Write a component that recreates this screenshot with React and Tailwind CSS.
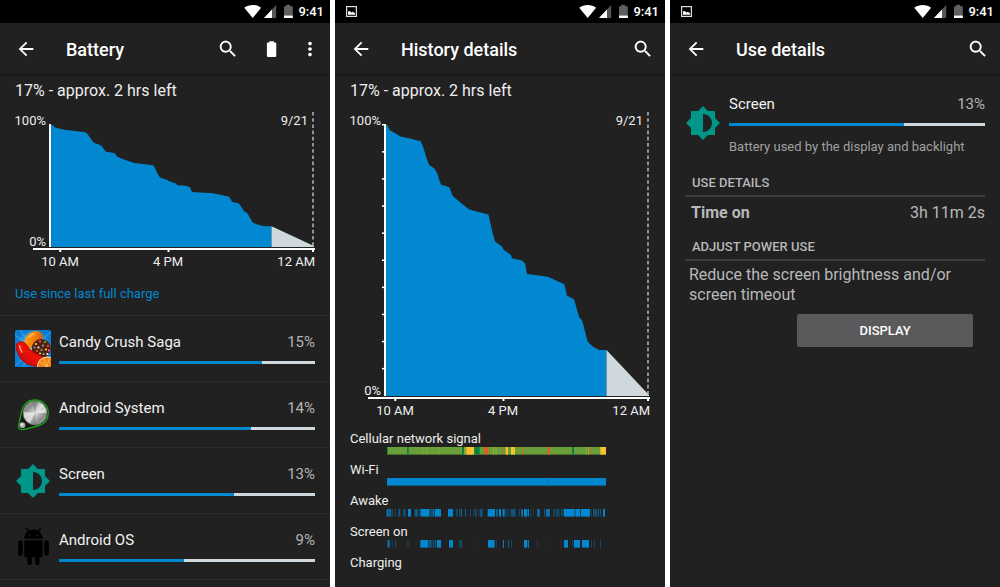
import React from "react";

/* Battery level over time: [x position, charge in percent] */
const LEVELS = [
  [51, 100], [52.3, 100], [55, 98], [58, 97.4], [65.7, 95.8], [75, 95], [85.7, 94], [88, 92],
  [92.3, 87], [94.3, 85.2], [99, 84], [102, 82.5], [104, 80], [106, 78], [114.3, 77], [117.7, 73.8],
  [126, 71.2], [134.3, 68.8], [153.3, 67], [154.5, 65.5], [157, 61], [160, 57], [167, 55.2],
  [168.7, 54], [176, 52], [177, 50.8], [187, 50], [190, 49], [192, 45], [213, 44], [229.3, 41.2],
  [232, 37], [239, 35.7], [244.3, 29], [247, 28], [252.7, 20], [258, 18.2], [264.3, 17], [271.5, 17],
];

function LevelChart({ height, ticks }) {
  const top = 21;
  const bottom = height - 27;
  const y = (level) => bottom - ((bottom - top) * level) / 100;
  const line = LEVELS.map(([x, level]) => `${x},${y(level)}`).join(" ");
  return (
    <svg
      viewBox={`0 0 330 ${height}`}
      className="block h-auto w-full fill-[#eeeeee] text-[13px]"
      role="img"
      aria-label="Battery level history"
    >
      <polygon points={`${line} 271.5,${bottom} 51,${bottom}`} fill="#0288d1" />
      <polygon points={`271.5,${y(17)} 314,${bottom - 1} 314,${bottom} 271.5,${bottom}`} fill="#cfd8dc" />
      <line x1="313" x2="313" y1="8" y2={bottom - 1} stroke="#c4c4c4" strokeWidth="1.4" strokeDasharray="3.6 2.6" />
      <rect x="49" y="20" width="2" height={bottom - 20} fill="#ffffff" />
      <rect x="33" y={bottom + 1} width="282" height="2" fill="#ffffff" />
      {[60.3, 168.5, 313].map((x) => (
        <rect key={x} x={x - 1} y={bottom + 2} width="2" height="3" fill="#ffffff" />
      ))}
      {ticks &&
        [100, 90, 80, 70, 60, 50, 40, 30, 20, 10].map((level) => (
          <rect key={level} x="47" y={y(level) - 1} width="3" height="1.5" fill="#ffffff" />
        ))}
      <text x="46" y="21" textAnchor="end">100%</text>
      <text x="46" y={bottom - 1} textAnchor="end">0%</text>
      <text x="308" y="21" textAnchor="end">9/21</text>
      <text x="60" y={bottom + 19} textAnchor="middle">10 AM</text>
      <text x="168" y={bottom + 19} textAnchor="middle">4 PM</text>
      <text x="315" y={bottom + 19} textAnchor="end">12 AM</text>
    </svg>
  );
}

function StatusBar({ picture }) {
  return (
    <div className="flex h-[23px] items-center bg-black pr-[6px] pl-[11px] text-white">
      {picture && (
        <svg width="11" height="11" viewBox="0 0 11 11" aria-hidden="true">
          <rect x=".6" y=".6" width="9.8" height="9.8" fill="none" stroke="#e0e0e0" strokeWidth="1.2" />
          <path d="M2 8.8V5.6l1.8-.6 1.6 1.6 1.5-.9 2.1 1.6v1.5z" fill="#fff" />
        </svg>
      )}
      <div className="ml-auto flex items-center">
        <svg width="50" height="15" viewBox="0 0 50 15" aria-hidden="true">
          <path d="M.3 3.7C2.6 2 5.5 1 8.7 1s6.100 1 8.400 2.700L8.700 14z" fill="#fff" />
          <path d="M32.200 1v13H20z" fill="#555" />
          <path d="M28 5.500V14h-8z" fill="#fff" />
          <path d="M40 2.200h2.200V.7h4v1.500h2.600V14H40z" fill="#5f5f5f" />
          <path d="M40 11.600h8.800V14H40z" fill="#fff" />
        </svg>
        <span className="ml-1 text-[13px] leading-4 font-medium">9:41</span>
      </div>
    </div>
  );
}

function IconButton({ label, children }) {
  return (
    <button type="button" aria-label={label} className="shrink-0">
      <svg width="22" height="22" viewBox="0 0 24 24" fill="#fff" aria-hidden="true">
        {children}
      </svg>
    </button>
  );
}

function Toolbar({ title, extra }) {
  return (
    <header className="flex h-[53px] items-center border-b-2 border-[#191919] px-[15px]">
      <IconButton label="Back">
        <path d="M20 11H7.830l5.590-5.590L12 4l-8 8 8 8 1.410-1.410L7.830 13H20v-2z" />
      </IconButton>
      <h1 className="ml-[29px] pt-[2px] text-[18px] leading-6 font-medium text-white">{title}</h1>
      <div className={extra ? "-mr-[6px] ml-auto flex items-center gap-[19px]" : "-mr-[4px] ml-auto flex items-center"}>
        <IconButton label="Search">
          <path d="M15.500 14h-.790l-.280-.270C15.410 12.590 16 11.110 16 9.500 16 5.910 13.090 3 9.500 3S3 5.910 3 9.500 5.910 16 9.500 16c1.610 0 3.090-.590 4.230-1.570l.270.280v.790l5 4.990L20.490 19l-4.990-5zm-6 0C7.010 14 5 11.990 5 9.500S7.010 5 9.500 5 14 7.010 14 9.500 11.990 14 9.500 14z" />
        </IconButton>
        {extra && (
          <>
            <IconButton label="Battery saver">
              <path d="M9.700 5.900c0-.5.400-.9.900-.9h1.700V3.600h5V5h1.700c.5 0 .9.400.9.900v13.800c0 .5-.4.900-.9.900h-8.400c-.5 0-.9-.4-.9-.9z" />
            </IconButton>
            <IconButton label="More options">
              <path d="M12 8c1.100 0 2-.9 2-2s-.9-2-2-2-2 .9-2 2 .9 2 2 2zm0 2c-1.100 0-2 .9-2 2s.9 2 2 2 2-.9 2-2-.9-2-2-2zm0 6c-1.100 0-2 .9-2 2s.9 2 2 2 2-.9 2-2-.9-2-2-2z" />
            </IconButton>
          </>
        )}
      </div>
    </header>
  );
}

function Panel({ title, picture, extra, children }) {
  return (
    <section className="flex min-w-0 flex-col bg-[#212121]" aria-label={title}>
      <StatusBar picture={picture} />
      <Toolbar title={title} extra={extra} />
      {children}
    </section>
  );
}

function Summary() {
  return (
    <p className="px-[15px] pt-[2px] text-[16px] leading-[26px] text-[#eeeeee]">17% - approx. 2 hrs left</p>
  );
}

function CandyIcon() {
  return (
    <svg width="36" height="37" viewBox="0 0 36 37" aria-hidden="true">
      <defs>
        <radialGradient id="sky">
          <stop offset="0" stopColor="#b4e6fc" />
          <stop offset=".55" stopColor="#49aee8" />
          <stop offset="1" stopColor="#0b7ed2" />
        </radialGradient>
        <linearGradient id="orange" x1="0" y1="0" x2="1" y2="1">
          <stop offset="0" stopColor="#ffab25" />
          <stop offset=".5" stopColor="#f58207" />
          <stop offset="1" stopColor="#c94d00" />
        </linearGradient>
        <linearGradient id="red" x1="0" y1="1" x2="1" y2="0">
          <stop offset="0" stopColor="#b80008" />
          <stop offset=".5" stopColor="#ee1208" />
          <stop offset="1" stopColor="#d80a0a" />
        </linearGradient>
        <clipPath id="tile">
          <rect width="36" height="37" rx="1.500" />
        </clipPath>
      </defs>
      <g clipPath="url(#tile)">
        <rect width="36" height="37" fill="url(#sky)" />
        <path d="M18 18 0 5M18 18 5 0M18 18 36 2M18 18 0 36M18 18 8 37" stroke="#8ed3f5" strokeWidth="1" opacity=".4" />
        <ellipse cx="18.500" cy="9.500" rx="10" ry="7.500" transform="rotate(-38 18.500 9.500)" fill="url(#orange)" />
        <path d="M14.500 7c1-1.600 2.500-2.700 4.500-3.200" stroke="#ffd07a" strokeWidth="1.300" strokeLinecap="round" fill="none" />
        <circle cx="26.300" cy="18.500" r="9.600" fill="#58200f" />
        {[
          [21, 14, "#ffe14a"], [25, 11.500, "#ff4fa0"], [30, 12, "#59c83d"], [33, 16, "#ff5a36"],
          [28, 15.500, "#57b8ff"], [23.500, 17.500, "#f5f5f5"], [31, 19.500, "#ffd83b"], [26.500, 20, "#4fd058"],
          [34, 20.500, "#f06bd0"], [22, 21, "#ff5050"], [28.500, 24, "#55b7ff"], [32.500, 24, "#ffffff"],
          [19.500, 17.500, "#48aaf0"], [25, 23.500, "#ffd43b"],
        ].map(([cx, cy, fill]) => (
          <circle key={`${cx}-${cy}`} cx={cx} cy={cy} r="1.050" fill={fill} />
        ))}
        <path
          d="M1.200 17.500c-.6-3.800 2-6 5-5.800 2.800.2 4.600 1.600 6 4 2.200 3.700 5.500 6.300 10.300 8.400 4 1.700 6 3.400 6 6.800 0 4-3.500 5.600-8 5.300C9.500 35.500 2.400 27 1.200 17.500z"
          fill="url(#red)"
          stroke="#8f0005"
          strokeWidth=".7"
        />
        <path d="M4.600 15.800c.4 2.600 1.200 4.600 2.400 6.300" stroke="#ff9c8c" strokeWidth="1.500" strokeLinecap="round" fill="none" />
        <circle cx="32" cy="36.500" r="10" fill="#ffd59b" />
        <circle cx="32" cy="36.500" r="9" fill="#f3820f" />
        <path d="M32 37 25 32M32 37l-3-8M32 37l2-8" stroke="#ffc064" strokeWidth=".9" />
      </g>
    </svg>
  );
}

function AndroidSystemIcon() {
  return (
    <svg width="36" height="36" viewBox="0 0 36 36" aria-hidden="true">
      <defs>
        <linearGradient id="metal" x1="0" y1="0" x2="1" y2="1">
          <stop offset="0" stopColor="#a8a8a8" />
          <stop offset=".25" stopColor="#8a8a8a" />
          <stop offset=".5" stopColor="#e2e2e2" />
          <stop offset=".75" stopColor="#8c8c8c" />
          <stop offset="1" stopColor="#b0b0b0" />
        </linearGradient>
      </defs>
      <path
        d="M20 3c7.600 0 13.300 6 13.300 13 0 6.700-4.500 11.300-10.800 13L8 32.600c-3 .6-4.700-1.200-4.400-4L6.700 14C8 7.500 13 3 20 3z"
        fill="#171717"
        stroke="#17a51a"
        strokeWidth="1.300"
      />
      <circle cx="20" cy="16" r="11.900" fill="url(#metal)" />
      <path d="M20 16 8.500 15a12 12 0 0 0 1 6zM20 16l11-5a12 12 0 0 1 1 5z" fill="#fff" opacity=".55" />
      <path d="M20 16 15 27a12 12 0 0 0 6 1zM20 16l-3-11.500a12 12 0 0 1 6 0z" fill="#555" opacity=".3" />
      <circle cx="20" cy="16" r="11.900" fill="none" stroke="#777" strokeWidth=".6" />
      <circle cx="7.400" cy="28.200" r="2.900" fill="#aaa" />
      <circle cx="7" cy="27.600" r="1.300" fill="#eee" />
    </svg>
  );
}

function BrightnessIcon() {
  return (
    <svg width="36" height="36" viewBox="0 0 24 24" fill="#009688" aria-hidden="true">
      <path d="M20 8.690V4h-4.690L12 .690 8.690 4H4v4.690L.690 12 4 15.310V20h4.690L12 23.310 15.310 20H20v-4.690L23.310 12 20 8.690zM12 18V6c3.310 0 6 2.690 6 6s-2.690 6-6 6z" />
    </svg>
  );
}

function RobotIcon() {
  return (
    <svg width="37" height="37" viewBox="0 0 24 24" fill="#000" aria-hidden="true">
      <path d="M6 18c0 .55.45 1 1 1h1v3.500c0 .83.67 1.500 1.500 1.500s1.500-.67 1.500-1.500V19h2v3.500c0 .83.67 1.500 1.500 1.500s1.500-.67 1.500-1.500V19h1c.55 0 1-.45 1-1V8H6v10zM3.500 8C2.670 8 2 8.670 2 9.500v7c0 .83.67 1.500 1.500 1.500S5 17.330 5 16.500v-7C5 8.670 4.330 8 3.500 8zm17 0c-.83 0-1.500.67-1.500 1.500v7c0 .83.67 1.500 1.500 1.500s1.500-.67 1.500-1.500v-7c0-.83-.67-1.500-1.500-1.500zm-4.970-5.840l1.300-1.300c.2-.2.2-.51 0-.71-.2-.2-.51-.2-.71 0l-1.480 1.480C13.850 1.230 12.950 1 12 1c-.96 0-1.860.23-2.660.63L7.850.15c-.2-.2-.51-.2-.71 0-.2.2-.2.51 0 .71l1.310 1.310C6.970 3.260 6 5.010 6 7h12c0-1.990-.97-3.750-2.470-4.840zM10 5H9V4h1v1zm5 0h-1V4h1v1z" />
    </svg>
  );
}

function Usage({ name, percent, fill }) {
  return (
    <div>
      <div className="flex justify-between text-[15px] leading-5">
        <span className="text-[#f2f2f2]">{name}</span>
        <span className="text-[#b4b4b4]">{percent}%</span>
      </div>
      <div
        className="mt-[9px] h-[3px] bg-[#cfd8dc]"
        role="progressbar"
        aria-label={name}
        aria-valuenow={percent}
      >
        <div className="h-full bg-[#0288d1]" style={{ width: `${fill}%` }} />
      </div>
    </div>
  );
}

const APPS = [
  { name: "Candy Crush Saga", percent: 15, fill: 79.2, Icon: CandyIcon },
  { name: "Android System", percent: 14, fill: 75, Icon: AndroidSystemIcon },
  { name: "Screen", percent: 13, fill: 68.2, Icon: BrightnessIcon },
  { name: "Android OS", percent: 9, fill: 49, Icon: RobotIcon },
];

/* Timeline segments: [start, end, colour or opacity], three units to a chart unit */
const G = "#0b8043";
const Y = "#fbc02d";
const O = "#93aa31";
const R = "#f4511e";
const SIGNAL = [
  [156, 813, "#689f38"],
  [156, 158, G], [216, 221, G], [381, 387, G], [418, 434, G], [711, 717, G],
  [394, 417, Y], [512, 519, Y], [528, 540, Y], [796, 813, Y],
  [262, 264, O], [275, 277, O], [309, 311, O], [388, 393, O], [474, 477, O], [481, 485, O], [752, 755, O], [759, 762, O],
  [449, 460, R], [501, 503, R], [564, 567, R], [639, 645, R], [768, 770, R],
];
const WIFI = [[156, 813, 1], [638, 641, "#0672b0"]];
const AWAKE = [
  [155, 159, 0.9], [160, 168, 0.7], [170, 173, 0.6], [179, 182, 0.4], [189, 196, 0.5], [205, 212, 0.5],
  [219, 228, 1], [239, 242, 0.8], [244, 247, 1], [251, 256, 0.4], [257, 283, 1], [284, 287, 0.7],
  [289, 292, 0.7], [293, 298, 0.8], [300, 318, 1], [339, 354, 1], [364, 369, 0.4], [373, 376, 0.6],
  [378, 381, 0.7], [390, 393, 0.7], [405, 408, 0.4], [414, 416, 0.5], [419, 426, 0.4], [431, 433, 0.5],
  [436, 441, 0.7], [443, 445, 0.4], [458, 480, 1], [483, 489, 0.6], [492, 498, 1], [503, 509, 1],
  [511, 514, 0.5], [517, 519, 0.5], [521, 523, 0.4], [527, 542, 0.5], [552, 555, 0.4], [558, 564, 0.7],
  [567, 577, 1], [579, 582, 0.9], [586, 589, 0.4], [595, 597, 0.4], [606, 615, 0.7], [627, 630, 0.5],
  [633, 645, 0.8], [655, 658, 0.6], [662, 671, 0.4], [673, 675, 0.4], [678, 682, 0.5], [686, 719, 1],
  [721, 736, 1], [738, 765, 1], [769, 771, 0.5], [774, 787, 0.45], [789, 792, 0.6], [795, 798, 0.5], [804, 810, 1],
];
const SCREEN_ON = [
  [158, 163, 1], [166, 168, 0.3], [171, 173, 0.3], [180, 182, 0.6], [216, 218, 0.3], [221, 223, 0.4],
  [256, 280, 1], [282, 287, 0.7], [289, 292, 0.6], [294, 297, 0.5], [300, 303, 0.7], [306, 318, 1],
  [342, 354, 1], [371, 373, 0.6], [376, 380, 0.6], [417, 419, 0.2], [459, 479, 1], [483, 485, 0.4],
  [504, 507, 1], [519, 522, 0.6], [528, 530, 0.6], [567, 577, 1], [579, 582, 0.9], [606, 608, 0.4],
  [643, 644, 0.5], [676, 677, 0.4], [687, 699, 1], [711, 713, 0.4], [717, 735, 1], [741, 762, 1],
  [768, 771, 0.4], [777, 779, 0.6], [796, 798, 0.6],
];
const TIMELINES = [
  ["Cellular network signal", SIGNAL],
  ["Wi-Fi", WIFI],
  ["Awake", AWAKE],
  ["Screen on", SCREEN_ON],
  ["Charging", []],
];

function Timeline({ label, segments }) {
  return (
    <li className="pb-[7px]">
      <div className="px-[15px] text-[13px] leading-4 text-[#eeeeee]">{label}</div>
      <svg viewBox="0 0 330 8" className="block h-auto w-full" aria-hidden="true">
        {segments.map(([from, to, tone]) => (
          <rect
            key={`${from}-${to}`}
            x={from / 3}
            y="0"
            width={(to - from) / 3}
            height="7.600"
            fill={typeof tone === "string" ? tone : "#0288d1"}
            opacity={typeof tone === "string" ? 1 : tone}
          />
        ))}
      </svg>
    </li>
  );
}

function SectionTitle({ children }) {
  return (
    <h2 className="border-b-2 border-[#3c3c3c] px-[7px] pb-1 text-[13px] leading-4 font-medium text-[#b8b8b8]">
      {children}
    </h2>
  );
}

export default function App() {
  return (
    <main className="grid min-h-screen grid-cols-3 gap-[5px] bg-white font-['Roboto',sans-serif]">
      <Panel title="Battery" extra>
        <Summary />
        <LevelChart height={170} />
        <a href="#usage" className="mt-[10px] px-[15px] text-[13px] leading-5 text-[#0288d1]">
          Use since last full charge
        </a>
        <ul id="usage" className="mt-[11px] border-b border-[#2d2d2d]">
          {APPS.map(({ name, percent, fill, Icon }) => (
            <li key={name} className="border-t border-[#2d2d2d]">
              <a href="#details" className="flex h-[65px] items-center px-[15px]">
                <span className="flex w-11 shrink-0">
                  <Icon />
                </span>
                <div className="min-w-0 flex-1 pb-[2px]">
                  <Usage name={name} percent={percent} fill={fill} />
                </div>
              </a>
            </li>
          ))}
        </ul>
      </Panel>

      <Panel title="History details" picture>
        <Summary />
        <LevelChart height={319} ticks />
        <ul className="mt-2">
          {TIMELINES.map(([label, segments]) => (
            <Timeline key={label} label={label} segments={segments} />
          ))}
        </ul>
      </Panel>

      <Panel title="Use details" picture>
        <div id="details" className="px-[15px] pt-[18px]">
          <div className="flex">
            <span className="flex w-11 shrink-0 pt-[11px]">
              <BrightnessIcon />
            </span>
            <div className="min-w-0 flex-1">
              <Usage name="Screen" percent={13} fill={68.2} />
              <p className="mt-[11px] text-[13px] leading-5 whitespace-nowrap text-[#a0a0a0]">
                Battery used by the display and backlight
              </p>
            </div>
          </div>
          <div className="mt-[18px]">
            <SectionTitle>USE DETAILS</SectionTitle>
            <dl className="flex justify-between py-[6px] pl-[6px] text-[16px] leading-5 text-[#b8b8b8]">
              <dt className="font-bold">Time on</dt>
              <dd>3h 11m 2s</dd>
            </dl>
          </div>
          <div className="mt-[10px]">
            <SectionTitle>ADJUST POWER USE</SectionTitle>
            <p className="pt-1 pl-1 text-[16px] leading-5 text-[#b8b8b8]">
              Reduce the screen brightness and/or screen timeout
            </p>
            <div className="mt-[9px] flex justify-end pr-3">
              <button type="button" className="h-[33px] w-[61%] rounded-xs bg-[#5a5a5c] text-[13px] font-medium text-white">
                DISPLAY
              </button>
            </div>
          </div>
        </div>
      </Panel>
    </main>
  );
}
